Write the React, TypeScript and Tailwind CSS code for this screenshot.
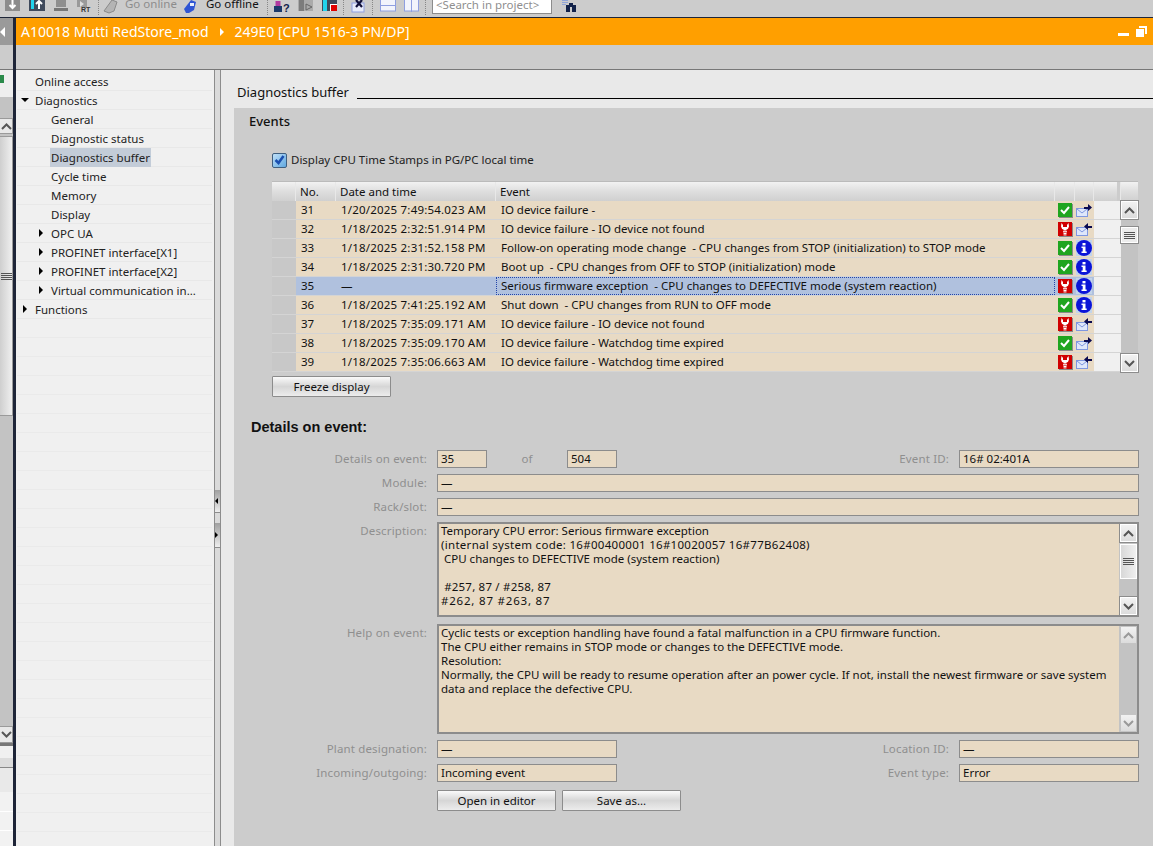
import type { ReactNode } from 'react';

const NAV = [
  { label: 'Online access', indent: 'pl-[18px]' },
  { label: 'Diagnostics', indent: 'pl-[18px]', arrow: 'down', arrowAt: 'left-[4px]' },
  { label: 'General', indent: 'pl-[34px]' },
  { label: 'Diagnostic status', indent: 'pl-[34px]' },
  { label: 'Diagnostics buffer', indent: 'pl-[34px]', selected: true },
  { label: 'Cycle time', indent: 'pl-[34px]' },
  { label: 'Memory', indent: 'pl-[34px]' },
  { label: 'Display', indent: 'pl-[34px]' },
  { label: 'OPC UA', indent: 'pl-[34px]', arrow: 'right', arrowAt: 'left-[22px]' },
  { label: 'PROFINET interface[X1]', indent: 'pl-[34px]', arrow: 'right', arrowAt: 'left-[22px]' },
  { label: 'PROFINET interface[X2]', indent: 'pl-[34px]', arrow: 'right', arrowAt: 'left-[22px]' },
  { label: 'Virtual communication in...', indent: 'pl-[34px]', arrow: 'right', arrowAt: 'left-[22px]' },
  { label: 'Functions', indent: 'pl-[18px]', arrow: 'right', arrowAt: 'left-[6px]' },
];

type Row = { no: number; date: string; event: string; state: 'ok' | 'err'; kind: 'in' | 'out' | 'info'; selected?: boolean };

const ROWS: Row[] = [
  { no: 31, date: '1/20/2025 7:49:54.023 AM', event: 'IO device failure -', state: 'ok', kind: 'out' },
  { no: 32, date: '1/18/2025 2:32:51.914 PM', event: 'IO device failure - IO device not found', state: 'err', kind: 'in' },
  { no: 33, date: '1/18/2025 2:31:52.158 PM', event: 'Follow-on operating mode change  - CPU changes from STOP (initialization) to STOP mode', state: 'ok', kind: 'info' },
  { no: 34, date: '1/18/2025 2:31:30.720 PM', event: 'Boot up  - CPU changes from OFF to STOP (initialization) mode', state: 'ok', kind: 'info' },
  { no: 35, date: '—', event: 'Serious firmware exception  - CPU changes to DEFECTIVE mode (system reaction)', state: 'err', kind: 'info', selected: true },
  { no: 36, date: '1/18/2025 7:41:25.192 AM', event: 'Shut down  - CPU changes from RUN to OFF mode', state: 'ok', kind: 'info' },
  { no: 37, date: '1/18/2025 7:35:09.171 AM', event: 'IO device failure - IO device not found', state: 'err', kind: 'in' },
  { no: 38, date: '1/18/2025 7:35:09.170 AM', event: 'IO device failure - Watchdog time expired', state: 'ok', kind: 'out' },
  { no: 39, date: '1/18/2025 7:35:06.663 AM', event: 'IO device failure - Watchdog time expired', state: 'err', kind: 'in' },
];

function StateIcon({ state }: { state: 'ok' | 'err' }) {
  if (state === 'ok') {
    return (
      <svg width="15" height="15" viewBox="0 0 15 15" shapeRendering="crispEdges">
        <rect x="1" y="1" width="14" height="14" fill="#8a8a8a" />
        <rect x="0" y="0" width="14" height="14" fill="#1fa51f" />
        <path d="M3 7l3 3 5-6" fill="none" stroke="#fff" strokeWidth="2" shapeRendering="auto" />
      </svg>
    );
  }
  return (
    <svg width="15" height="15" viewBox="0 0 15 15">
      <rect x="1" y="1" width="14" height="14" fill="#8a8a8a" />
      <rect x="0" y="0" width="14" height="14" fill="#d00000" />
      <path d="M3.5 1L3 4.5Q3.5 7 5.5 7.5V8.5H8.5V7.5Q10.5 7 11 4.5L10.5 1L9 3V5H5V3Z" fill="#fff" />
      <rect x="5" y="9.2" width="4" height="1.2" fill="#fff" />
      <rect x="5.5" y="11" width="3" height="1" fill="#fff" />
      <rect x="5.5" y="12.4" width="3" height="1" fill="#fff" />
    </svg>
  );
}

function KindIcon({ kind }: { kind: 'in' | 'out' | 'info' }) {
  if (kind === 'info') {
    return (
      <svg width="16" height="16" viewBox="0 0 16 16">
        <rect width="16" height="16" fill="#c2d4ea" />
        <circle cx="8" cy="8" r="8" fill="#0b14d8" />
        <rect x="6.5" y="3" width="3" height="2.4" fill="#fff" />
        <path d="M5.5 6.5h4v5h1.2V13H5.5v-1.5h1.2V8H5.5z" fill="#fff" />
      </svg>
    );
  }
  return (
    <svg width="16" height="13" viewBox="0 0 16 13">
      <rect x="0.5" y="4.5" width="11" height="8" fill="#dfe7fb" stroke="#7f97e0" />
      <path d="M1 5l5 4 5-4" fill="none" stroke="#7f97e0" />
      {kind === 'out' ? (
        <path d="M8 3h4V0l4 3.5L12 7V5H8z" fill="#0a0a50" />
      ) : (
        <path d="M16 3h-4V0L8 3.5 12 7V5h4z" fill="#0a0a50" />
      )}
    </svg>
  );
}

function Chevron({ dir, muted }: { dir: 'up' | 'down'; muted?: boolean }) {
  return (
    <svg width="11" height="7" viewBox="0 0 11 7">
      <path
        d={dir === 'up' ? 'M1 6l4.5-4.5L10 6' : 'M1 1l4.5 4.5L10 1'}
        fill="none"
        stroke={muted ? '#9a9a9a' : '#555'}
        strokeWidth="2"
      />
    </svg>
  );
}

function ScrollButton({ dir, muted }: { dir: 'up' | 'down'; muted?: boolean }) {
  return (
    <div
      className={`flex h-[18px] w-[17px] shrink-0 items-center justify-center bg-gradient-to-b from-[#f2f2f2] to-[#dcdcdc] ${muted ? 'border border-[#c4c4c4]' : 'border border-white outline outline-1 outline-[#8c8c8c]'}`}
    >
      <Chevron dir={dir} muted={muted} />
    </div>
  );
}

function Grip() {
  return (
    <div className="flex w-[11px] flex-col gap-px">
      <div className="h-px bg-[#555]" />
      <div className="h-px bg-[#555]" />
      <div className="h-px bg-[#555]" />
      <div className="h-px bg-[#555]" />
    </div>
  );
}

function Field({ className = '', children }: { className?: string; children?: ReactNode }) {
  return (
    <div className={`flex h-[18px] items-center border border-[#8c8c8c] bg-[#e8dac4] pl-[3px] text-[#111] ${className}`}>
      {children}
    </div>
  );
}

function Label({ className = 'w-[203px]', children }: { className?: string; children: ReactNode }) {
  return <div className={`shrink-0 pr-[10px] text-right tracking-[0.15px] text-[#8f8f8f] ${className}`}>{children}</div>;
}

function Button({ className = '', children }: { className?: string; children: ReactNode }) {
  return (
    <div
      className={`flex h-[21px] w-[119px] items-center justify-center rounded-[1px] border border-[#8c8c8c] bg-gradient-to-b from-[#fafafa] via-[#d6d6d6] to-[#ececec] text-[#111] ${className}`}
    >
      {children}
    </div>
  );
}

function Dots({ className }: { className: string }) {
  return <div className={`h-[15px] shrink-0 border-l border-dotted border-[#888] ${className}`} />;
}

function Toolbar() {
  return (
    <div className="flex h-[17px] shrink-0 items-start overflow-hidden bg-[#cccccc] text-[11.5px] leading-[12px]">
      <svg width="15" height="12" viewBox="0 0 15 12" className="ml-[5px] shrink-0">
        <rect width="15" height="11" fill="#8c8c8c" />
        <path d="M7.5 0v8M4.5 5l3 3 3-3" stroke="#fff" strokeWidth="2" fill="none" />
      </svg>
      <svg width="16" height="12" viewBox="0 0 16 12" className="ml-[9px] shrink-0">
        <rect width="16" height="11" fill="#3f4a5c" />
        <rect x="2" width="3" height="9" fill="#22d3ee" />
        <path d="M10 9V1M7 4l3-3 3 3" stroke="#fff" strokeWidth="2" fill="none" />
      </svg>
      <svg width="14" height="12" viewBox="0 0 14 12" className="ml-[9px] shrink-0">
        <rect x="2" width="10" height="7" fill="#8f8f8f" />
        <rect x="0" y="8" width="14" height="3" fill="#777" />
      </svg>
      <svg width="15" height="12" viewBox="0 0 15 12" className="ml-[9px] shrink-0">
        <rect x="0" width="10" height="7" fill="#9a9a9a" />
        <path d="M3 1l4 3-4 3z" fill="#ddd" />
        <text x="4" y="11.5" fontSize="7" fontWeight="700" fill="#333" fontFamily="Liberation Sans">RT</text>
      </svg>
      <Dots className="ml-[6px]" />
      <svg width="15" height="14" viewBox="0 0 15 14" className="ml-[4px] shrink-0">
        <path d="M1 11L9 0l5 2-3 9-5 2z" fill="#b4b4b4" stroke="#8a8a8a" />
      </svg>
      <span className="-mt-[2px] ml-[7px] w-[51px] shrink-0 whitespace-nowrap text-[#8c8c8c]">Go online</span>
      <svg width="13" height="14" viewBox="0 0 13 14" className="ml-[8px] shrink-0">
        <path d="M0 9l7-9 5 2-2 8-5 3H2z" fill="#2f55d4" />
        <rect x="6" y="3" width="4" height="3" fill="#e8eefc" />
      </svg>
      <span className="-mt-[2px] ml-[9px] w-[52px] shrink-0 whitespace-nowrap text-[#111]">Go offline</span>
      <Dots className="ml-[9px]" />
      <svg width="16" height="12" viewBox="0 0 16 12" className="ml-[6px] shrink-0">
        <rect x="0" y="6" width="8" height="6" fill="#1b3a6b" />
        <rect x="1.5" y="1" width="5" height="5" fill="#b03aa0" />
        <text x="9" y="11.5" fontSize="11" fontWeight="700" fill="#12224a" fontFamily="Liberation Sans">?</text>
      </svg>
      <svg width="15" height="12" viewBox="0 0 15 12" className="ml-[8px] shrink-0">
        <rect width="15" height="11" fill="#aaa" />
        <rect x="1" width="5" height="11" fill="#7c7c7c" />
        <path d="M8 4l6 3-6 3z" fill="none" stroke="#666" />
      </svg>
      <svg width="15" height="12" viewBox="0 0 15 12" className="ml-[9px] shrink-0">
        <rect width="15" height="11" fill="#3f4a5c" />
        <rect x="1" width="4" height="11" fill="#22d3ee" />
        <rect x="8" y="4" width="7" height="7" fill="#fff" />
        <rect x="9" y="5" width="6" height="6" fill="#e00000" />
      </svg>
      <Dots className="ml-[6px]" />
      <svg width="16" height="13" viewBox="0 0 16 13" className="ml-[7px] shrink-0">
        <rect x="1" y="3" width="12" height="9" fill="#e8ecfa" stroke="#8f9fe0" />
        <path d="M5 0l6 7M11 0L5 7" stroke="#10103a" strokeWidth="2.2" />
      </svg>
      <Dots className="ml-[5px]" />
      <svg width="16" height="12" viewBox="0 0 16 12" className="ml-[7px] shrink-0">
        <rect x="0.5" y="-1" width="15" height="12" fill="#f2f4fc" stroke="#8f9fe0" />
        <path d="M0 5.5h16" stroke="#8f9fe0" />
      </svg>
      <svg width="15" height="12" viewBox="0 0 15 12" className="ml-[8px] shrink-0">
        <rect x="0.5" y="-1" width="14" height="12" fill="#f2f4fc" stroke="#8f9fe0" />
        <path d="M7.5 0v12" stroke="#8f9fe0" />
      </svg>
      <Dots className="ml-[6px]" />
      <div className="ml-[6px] h-[14px] w-[120px] shrink-0 whitespace-nowrap border border-t-0 border-[#8c8c8c] bg-white pl-[3px] leading-[10px] text-[#8f8f8f]">
        &lt;Search in project&gt;
      </div>
      <svg width="15" height="12" viewBox="0 0 15 12" className="ml-[10px] shrink-0">
        <rect x="0" y="0" width="6" height="1" fill="#8fa4d8" />
        <rect x="0" y="2" width="6" height="1" fill="#8fa4d8" />
        <rect x="0" y="4" width="4" height="1" fill="#8fa4d8" />
        <rect x="4" y="5" width="4" height="7" fill="#12224a" />
        <rect x="10" y="5" width="4" height="7" fill="#12224a" />
        <rect x="7" y="3" width="4" height="4" fill="#12224a" />
      </svg>
    </div>
  );
}

function LeftStrip() {
  return (
    <div className="flex w-[13px] shrink-0 flex-col overflow-hidden">
      <div className="flex h-[27px] shrink-0 items-center bg-[#9a9a9a]">
        <div className="h-0 w-0 border-y-[5px] border-r-[5px] border-y-transparent border-r-white" />
      </div>
      <div className="h-[25px] shrink-0 border-b border-[#777] bg-[#cccccc]" />
      <div className="h-[27px] shrink-0 bg-[#eeeeee] pt-[5px]">
        <div className="h-[8px] w-[4px] bg-[#2a8a4a]" />
      </div>
      <div className="h-[21px] shrink-0 bg-[#c3c3c3]" />
      <div className="flex h-[16px] shrink-0 items-center justify-center border border-[#9a9a9a] border-l-0 bg-[#e8e8e8]">
        <Chevron dir="up" />
      </div>
      <div className="h-[2px] shrink-0 bg-[#c3c3c3]" />
      <div className="flex h-[280px] shrink-0 items-center justify-center border border-l-0 border-[#9a9a9a] bg-gradient-to-r from-[#cfcfcf] to-[#efefef]">
        <Grip />
      </div>
      <div className="h-[310px] shrink-0 bg-[#c3c3c3]" />
      <div className="flex h-[17px] shrink-0 items-center justify-center border border-l-0 border-[#9a9a9a] bg-[#e8e8e8]">
        <Chevron dir="down" />
      </div>
      <div className="h-[3px] shrink-0 bg-[#777]" />
      <div className="h-[12px] shrink-0 bg-[#f0f0f0]" />
      <div className="h-[10px] shrink-0 border-b border-[#888] bg-[#dcdcdc]" />
      <div className="h-[24px] shrink-0 bg-[#e9e9e9]" />
      <div className="h-[20px] shrink-0 border-b border-white bg-[#f2f2f2]" />
      <div className="h-[19px] shrink-0 border-b border-white bg-[#f2f2f2]" />
      <div className="flex-1 bg-[#f2f2f2]" />
    </div>
  );
}

function NavTree() {
  return (
    <div className="flex w-[198px] shrink-0 flex-col bg-[#f0f0f0] pt-[2px] pr-[2px] pl-[1px]">
      {NAV.map((n) => (
        <div key={n.label} className={`relative flex h-[19px] shrink-0 items-center border-b border-[#e8e8e8] ${n.indent}`}>
          {n.arrow === 'down' && (
            <div className={`absolute top-[7px] h-0 w-0 border-x-[4px] border-t-[4px] border-x-transparent border-t-black ${n.arrowAt}`} />
          )}
          {n.arrow === 'right' && (
            <div className={`absolute top-[5px] h-0 w-0 border-y-[4px] border-l-[4px] border-y-transparent border-l-black ${n.arrowAt}`} />
          )}
          <span className={`h-[19px] whitespace-nowrap leading-[19px] text-[#222] ${n.selected ? '-ml-[1px] bg-[#c3ccd8] pl-[1px] pr-[1px]' : ''}`}>{n.label}</span>
        </div>
      ))}
      {Array.from({ length: 28 }, (_, i) => (
        <div key={i} className="h-[19px] shrink-0 border-b border-[#eaeaea]" />
      ))}
    </div>
  );
}

function Splitter() {
  return (
    <div className="flex w-[7px] shrink-0 flex-col border-x border-[#8c8c8c] bg-[#dadada]">
      <div className="h-[420px] shrink-0" />
      <div className="flex h-[23px] shrink-0 items-center border-b border-[#8c8c8c] bg-gradient-to-b from-[#a0a0a0] to-[#eeeeee]">
        <div className="h-0 w-0 border-y-[3px] border-r-[3px] border-y-transparent border-r-black" />
      </div>
      <div className="h-[10px] shrink-0" />
      <div className="flex h-[25px] shrink-0 items-center border-b border-[#8c8c8c] bg-gradient-to-b from-[#a0a0a0] to-[#eeeeee]">
        <div className="h-0 w-0 border-y-[3px] border-l-[3px] border-y-transparent border-l-black" />
      </div>
    </div>
  );
}

function EventsTable() {
  return (
    <div className="ml-[38px] mt-[13px] flex w-[866px] flex-col">
      <div className="flex h-[20px] border-t border-[#bbb] bg-gradient-to-b from-[#f2f2f2] via-[#dedede] to-[#d0d0d0]">
        <div className="w-[24px] border-r border-[#e8e8e8]" />
        <div className="flex w-[40px] items-center border-r border-[#e8e8e8] pl-[4px]">No.</div>
        <div className="flex w-[160px] items-center border-r border-[#e8e8e8] pl-[4px]">Date and time</div>
        <div className="flex w-[559px] items-center border-r border-[#e8e8e8] pl-[4px]">Event</div>
        <div className="w-[20px] border-r border-[#e8e8e8]" />
        <div className="w-[19px] border-r border-[#e8e8e8]" />
        <div className="w-[26px] border-r-[3px] border-[#cccccc]" />
        <div className="flex-1 border-l border-[#e8e8e8]" />
      </div>
      <div className="flex">
        <div className="flex flex-col">
          {ROWS.map((r) => (
            <div key={r.no} className="flex h-[19px] border-b border-[#d4d4d4]">
              <div className="w-[24px] bg-[#c8c8c8]" />
              <div className={`flex w-[825px] ${r.selected ? 'bg-[#b0c1de]' : 'bg-[#e8dac4]'}`}>
                <div className="flex w-[40px] items-center pl-[5px]">{r.no}</div>
                <div className="flex w-[160px] items-center pl-[5px] tracking-[0.2px]">{r.date}</div>
                <div
                  className={`flex w-[559px] items-center whitespace-pre ${r.selected ? 'border border-dotted border-[#2244aa] pl-[4px]' : 'pl-[5px]'}`}
                >
                  {r.event}
                </div>
                <div className="flex w-[20px] items-center justify-center">
                  <StateIcon state={r.state} />
                </div>
                <div className="flex w-[19px] items-center pl-px">
                  <KindIcon kind={r.kind} />
                </div>
                <div className="flex-1 bg-[#f0f0f0]" />
              </div>
            </div>
          ))}
        </div>
        <div className="flex w-[17px] flex-col items-center bg-[#c3c3c3]">
          <ScrollButton dir="up" />
          <div className="mt-[8px] flex h-[16px] w-[17px] items-center justify-center border border-white bg-[#ececec] outline outline-1 outline-[#8c8c8c]">
            <Grip />
          </div>
          <div className="flex-1" />
          <ScrollButton dir="down" />
        </div>
      </div>
    </div>
  );
}

function TextBox({ height, children, muted }: { height: string; children: ReactNode; muted?: boolean }) {
  return (
    <div className={`flex min-w-0 flex-1 border-2 border-[#8c8c8c] ${height}`}>
      <div className="min-w-0 flex-1 whitespace-pre bg-[#e8dac4] pl-[2px] leading-[14px] text-[#111]">{children}</div>
      <div className="flex w-[18px] shrink-0 flex-col items-center bg-[#c3c3c3]">
        <ScrollButton dir="up" muted={muted} />
        {!muted && (
          <div className="mt-[2px] flex h-[35px] w-[17px] items-center justify-center border border-white bg-gradient-to-r from-[#d8d8d8] to-[#f0f0f0]">
            <Grip />
          </div>
        )}
        <div className="flex-1" />
        <ScrollButton dir="down" muted={muted} />
      </div>
    </div>
  );
}

function Details() {
  return (
    <div className="mt-[14px] flex flex-col pr-[14px]">
      <div className="flex items-center">
        <Label>Details on event:</Label>
        <Field className="w-[50px]">35</Field>
        <div className="w-[80px] text-center text-[#8f8f8f]">of</div>
        <Field className="w-[50px]">504</Field>
        <Label className="w-[342px]">Event ID:</Label>
        <Field className="w-[180px]">16# 02:401A</Field>
      </div>
      <div className="mt-[6px] flex items-center">
        <Label>Module:</Label>
        <Field className="flex-1">—</Field>
      </div>
      <div className="mt-[6px] flex items-center">
        <Label>Rack/slot:</Label>
        <Field className="flex-1">—</Field>
      </div>
      <div className="mt-[6px] flex items-start">
        <Label className="w-[203px] pt-[2px]">Description:</Label>
        <TextBox height="h-[95px]">
          <div className="h-[14px]">Temporary CPU error: Serious firmware exception</div>
          <div className="h-[14px] tracking-[0.29px]">(internal system code: 16#00400001 16#10020057 16#77B62408)</div>
          <div className="h-[14px]"> CPU changes to DEFECTIVE mode (system reaction)</div>
          <div className="h-[14px]" />
          <div className="h-[14px] tracking-[0.2px]"> #257, 87 / #258, 87</div>
          <div className="h-[14px] tracking-[0.8px]">#262, 87 #263, 87</div>
        </TextBox>
      </div>
      <div className="mt-[7px] flex items-start">
        <Label className="w-[203px] pt-[2px]">Help on event:</Label>
        <TextBox muted height="h-[110px]">
          <div className="h-[14px]">Cyclic tests or exception handling have found a fatal malfunction in a CPU firmware function.</div>
          <div className="h-[14px]">The CPU either remains in STOP mode or changes to the DEFECTIVE mode.</div>
          <div className="h-[14px]">Resolution:</div>
          <div className="h-[14px]">Normally, the CPU will be ready to resume operation after an power cycle. If not, install the newest firmware or save system</div>
          <div className="h-[14px]">data and replace the defective CPU.</div>
        </TextBox>
      </div>
      <div className="mt-[6px] flex items-center">
        <Label>Plant designation:</Label>
        <Field className="w-[180px]">—</Field>
        <Label className="w-[342px]">Location ID:</Label>
        <Field className="w-[180px]">—</Field>
      </div>
      <div className="mt-[6px] flex items-center">
        <Label>Incoming/outgoing:</Label>
        <Field className="w-[180px]">Incoming event</Field>
        <Label className="w-[342px]">Event type:</Label>
        <Field className="w-[180px]">Error</Field>
      </div>
      <div className="ml-[203px] mt-[8px] flex gap-[6px]">
        <Button>Open in editor</Button>
        <Button>Save as...</Button>
      </div>
    </div>
  );
}

function Content() {
  return (
    <div className="flex min-w-0 flex-1 flex-col bg-[#e9e9e9]">
      <div className="flex h-[38px] shrink-0 items-end pl-[16px]">
        <span className="mb-[5px] text-[13px] leading-[22px] text-[#111]">Diagnostics buffer</span>
        <div className="mb-[9px] ml-[8px] h-px flex-1 bg-black" />
      </div>
      <div className="ml-[13px] flex flex-1 flex-col bg-[#cccccc]">
        <div className="h-[26px] pl-[15px] pt-[4px] text-[13px] font-medium leading-[18px] text-[#111]">Events</div>
        <div className="ml-[38px] mt-[18px] flex h-[16px] items-center gap-[4px]">
          <div className="flex h-[15px] w-[15px] items-center justify-center rounded-[2px] border border-[#3f5f80] bg-gradient-to-br from-[#bfe0f8] to-[#5fa8e0]">
            <svg width="11" height="10" viewBox="0 0 11 10">
              <path d="M1.5 5l3 3 5-7" fill="none" stroke="#1a4fb0" strokeWidth="2.6" />
            </svg>
          </div>
          <span className="text-[#222]">Display CPU Time Stamps in PG/PC local time</span>
        </div>
        <EventsTable />
        <div className="ml-[38px] mt-[4px]">
          <Button>Freeze display</Button>
        </div>
        <div className="ml-[17px] mt-[21px] h-[18px] font-['Liberation_Sans',sans-serif] text-[14.5px] font-bold leading-[18px] text-[#111]">
          Details on event:
        </div>
        <Details />
      </div>
    </div>
  );
}

export default function App() {
  return (
    <div className="flex h-[846px] w-[1153px] flex-col overflow-hidden bg-[#cccccc] font-['Noto_Sans',sans-serif] text-[11.5px] leading-[14px] text-[#111]">
      <Toolbar />
      <div className="h-px shrink-0 bg-[#1e2538]" />
      <div className="flex min-h-0 flex-1">
        <LeftStrip />
        <div className="w-[3px] shrink-0 bg-[#1e2538]" />
        <div className="flex min-w-0 flex-1 flex-col">
          <div className="flex h-[27px] shrink-0 items-center bg-[#ff9f00] pl-[5px] pr-[6px] text-[14px] text-white">
            <span>A10018 Mutti RedStore_mod</span>
            <div className="ml-[11px] mr-[11px] h-0 w-0 border-y-[4px] border-l-[4px] border-y-transparent border-l-white" />
            <span>249E0 [CPU 1516-3 PN/DP]</span>
            <div className="ml-auto h-[3px] w-[11px] translate-y-[3px] bg-white" />
            <div className="relative ml-[7px] h-[11px] w-[11px]">
              <div className="absolute right-0 top-0 h-[8px] w-[8px] border-r-2 border-t-2 border-white" />
              <div className="absolute bottom-0 left-0 h-[8px] w-[8px] bg-white" />
            </div>
          </div>
          <div className="h-[25px] shrink-0 border-b border-[#777] bg-[#cccccc]" />
          <div className="flex min-h-0 flex-1 overflow-hidden">
            <NavTree />
            <Splitter />
            <Content />
          </div>
        </div>
      </div>
    </div>
  );
}
